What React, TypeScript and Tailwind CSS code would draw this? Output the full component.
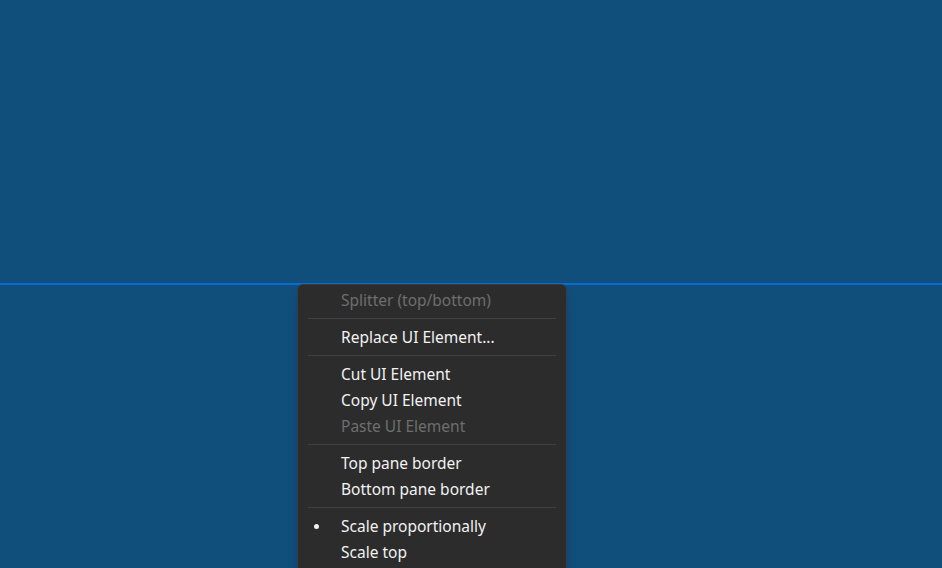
import React from "react";

type Item =
  | { kind: "item"; label: string; disabled?: boolean; checked?: boolean }
  | { kind: "sep" };

const items: Item[] = [
  { kind: "item", label: "Splitter (top/bottom)", disabled: true },
  { kind: "sep" },
  { kind: "item", label: "Replace UI Element..." },
  { kind: "sep" },
  { kind: "item", label: "Cut UI Element" },
  { kind: "item", label: "Copy UI Element" },
  { kind: "item", label: "Paste UI Element", disabled: true },
  { kind: "sep" },
  { kind: "item", label: "Top pane border" },
  { kind: "item", label: "Bottom pane border" },
  { kind: "sep" },
  { kind: "item", label: "Scale proportionally", checked: true },
  { kind: "item", label: "Scale top" },
];

const App: React.FC = () => {
  return (
    <div className="relative w-[942px] h-[568px] overflow-hidden bg-[#104e7c] font-['Noto_Sans',sans-serif]">
      <div className="h-[283px]" />
      <div className="h-[2px] bg-[#0a6bd1]" />

      <div className="absolute left-[297px] top-[284px] w-[270px] h-[300px] rounded-md border border-[#3c3c3c] bg-[#2c2c2c] pt-[2px] shadow-lg">
        {items.map((it, i) =>
          it.kind === "sep" ? (
            <div key={i} className="mx-[10px] my-[5px] h-px bg-[#404040]" />
          ) : (
            <div
              key={i}
              className={
                it.disabled
                  ? "relative flex h-[26px] items-center pt-[2px] pl-[43px] text-[15.5px] text-[#6e6e6e]"
                  : "relative flex h-[26px] items-center pt-[2px] pl-[43px] text-[15.5px] text-[#f2f2f2]"
              }
            >
              {it.checked && (
                <span className="absolute left-[16px] top-[11px] h-[5px] w-[5px] rounded-full bg-[#f2f2f2]" />
              )}
              {it.label}
            </div>
          )
        )}
      </div>
    </div>
  );
};

export default App;
